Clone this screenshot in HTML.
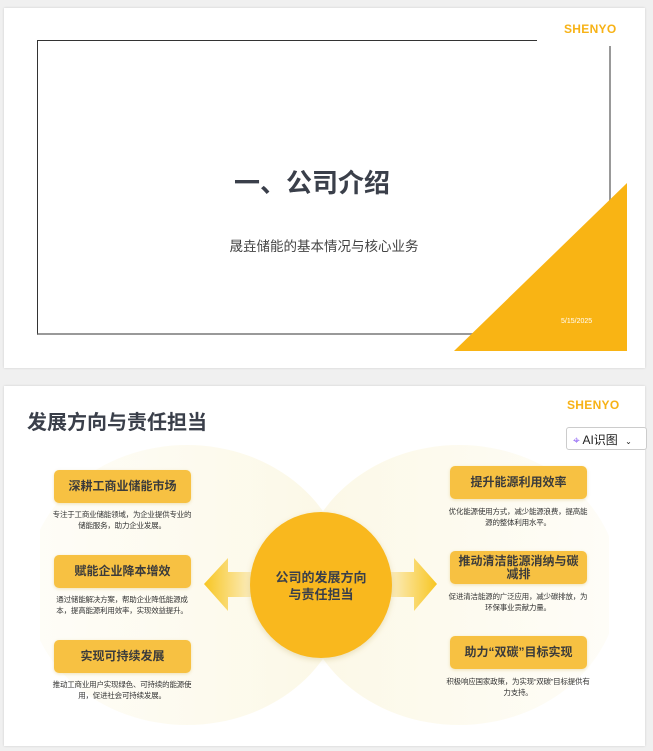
<!DOCTYPE html>
<html><head><meta charset="utf-8"><style>
*{margin:0;padding:0;box-sizing:border-box}
body{width:653px;height:751px;background:#f0f0f0;position:relative;overflow:hidden;font-family:"Liberation Sans","Noto Sans CJK SC",sans-serif}
.s{position:absolute;background:#fff;box-shadow:0 0 2px #ccc}
.a{position:absolute}
.logo{color:#f7b216;font-weight:bold;font-size:12px;letter-spacing:0.3px}
.box{position:absolute;width:137px;height:33px;background:#f7c142;border-radius:5px;box-shadow:0 1px 3px rgba(200,150,0,.25);color:#3b3b3b;font-weight:bold;font-size:12px;display:flex;align-items:center;justify-content:center;text-align:center;line-height:13px}
.d{position:absolute;width:140px;font-size:7.5px;line-height:11px;color:#333;text-align:center;letter-spacing:-0.2px}
</style></head><body>
<div class="s" style="left:4px;top:8px;width:641px;height:360px">
  <div class="a" style="left:33px;top:32px;width:574px;height:295px;border:1px solid #333;border-right:2px solid #999;border-bottom:2px solid #999"></div>
  <svg class="a" style="left:0;top:0" width="641" height="360"><polygon points="450,343 623,175 623,343" fill="#f9b414"/></svg>
  <div class="a" style="left:533px;top:0;width:108px;height:38px;background:#fff"></div>
  <div class="a logo" style="left:560px;top:14px">SHENYO</div>
  <div class="a" style="left:0;width:616px;top:155px;text-align:center;font-size:26px;font-weight:bold;color:#3a3f4a">一、公司介绍</div>
  <div class="a" style="left:0;width:640px;top:227px;text-align:center;font-size:13.5px;color:#444">晟垚储能的基本情况与核心业务</div>
  <div class="a" style="left:557px;top:310px;font-size:7px;color:#fff">5/15/2025</div>
</div>
<div class="s" style="left:4px;top:386px;width:641px;height:360px">
  <div class="a logo" style="left:563px;top:12px">SHENYO</div>
  <div class="a" style="left:23px;top:20px;font-size:20px;font-weight:bold;color:#3a3f4a">发展方向与责任担当</div>
  <svg class="a" style="left:0;top:0" width="641" height="360">
    <defs>
      <linearGradient id="gl" x1="0" x2="1"><stop offset="0" stop-color="#fefdf8"/><stop offset="1" stop-color="#fcf8e6"/></linearGradient>
      <linearGradient id="gr" x1="1" x2="0"><stop offset="0" stop-color="#fefdf8"/><stop offset="1" stop-color="#fcf8e6"/></linearGradient>
      <linearGradient id="al" x1="0" x2="1"><stop offset="0" stop-color="#f8c622"/><stop offset="1" stop-color="#fbefc8"/></linearGradient>
      <linearGradient id="ar" x1="1" x2="0"><stop offset="0" stop-color="#f8c622"/><stop offset="1" stop-color="#fbefc8"/></linearGradient>
      <clipPath id="c"><rect x="36" y="0" width="569" height="360"/></clipPath>
    </defs>
    <g clip-path="url(#c)">
      <ellipse cx="183" cy="199" rx="160" ry="140" fill="url(#gl)"/>
      <ellipse cx="455" cy="199" rx="160" ry="140" fill="url(#gr)"/>
    </g>
    <polygon points="433,198 410,172 410,186 384,186 384,211 410,211 410,225" fill="url(#ar)"/>
    <polygon points="200,198 224,172 224,186 250,186 250,211 224,211 224,225" fill="url(#al)"/>
    <ellipse cx="317" cy="199" rx="71" ry="73" fill="#f9b81e" style="filter:drop-shadow(0 2px 3px rgba(150,120,0,.2))"/>
    <text x="317" y="196" text-anchor="middle" font-size="13" font-weight="bold" fill="#3a3f4a" font-family="Liberation Sans,Noto Sans CJK SC,sans-serif">公司的发展方向</text>
    <text x="317" y="213" text-anchor="middle" font-size="13" font-weight="bold" fill="#3a3f4a" font-family="Liberation Sans,Noto Sans CJK SC,sans-serif">与责任担当</text>
  </svg>
  <div class="box" style="left:50px;top:84px">深耕工商业储能市场</div>
  <div class="d" style="left:48px;top:123px">专注于工商业储能领域，为企业提供专业的储能服务，助力企业发展。</div>
  <div class="box" style="left:50px;top:169px">赋能企业降本增效</div>
  <div class="d" style="left:48px;top:208px">通过储能解决方案，帮助企业降低能源成本，提高能源利用效率，实现效益提升。</div>
  <div class="box" style="left:50px;top:254px">实现可持续发展</div>
  <div class="d" style="left:48px;top:293px">推动工商业用户实现绿色、可持续的能源使用，促进社会可持续发展。</div>
  <div class="box" style="left:446px;top:80px">提升能源利用效率</div>
  <div class="d" style="left:444px;top:120px">优化能源使用方式，减少能源浪费，提高能源的整体利用水平。</div>
  <div class="box" style="left:446px;top:165px;padding:0 4px">推动清洁能源消纳与碳减排</div>
  <div class="d" style="left:444px;top:205px">促进清洁能源的广泛应用，减少碳排放，为环保事业贡献力量。</div>
  <div class="box" style="left:446px;top:250px">助力“双碳”目标实现</div>
  <div class="d" style="left:440px;top:290px;width:148px">积极响应国家政策，为实现“双碳”目标提供有力支持。</div>
  <div class="a" style="left:562px;top:41px;width:81px;height:23px;background:#fff;border:1px solid #ccc;border-radius:3px;font-size:12px;color:#222;padding:3px 0 0 6px"><span style="color:#8a5cf5">⌖</span> AI识图 <span style="font-size:8px;margin-left:4px">⌄</span></div>
</div>
</body></html>
